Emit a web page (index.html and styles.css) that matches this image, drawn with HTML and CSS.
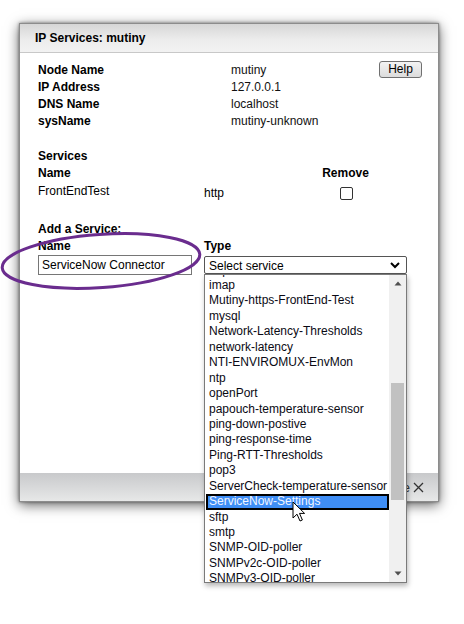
FILE: index.html
```html
<!DOCTYPE html>
<html>
<head>
<meta charset="utf-8">
<link rel="stylesheet" href="styles.css">
</head>
<body>
<div class="stage">
  <div class="dialog">
    <div class="dlg-head">IP Services: mutiny</div>
    <div class="dlg-body">
      <div class="info">
        <div class="lbl">Node Name</div><div class="val">mutiny</div><button class="help">Help</button>
        <div class="lbl">IP Address</div><div class="val">127.0.0.1</div><div></div>
        <div class="lbl">DNS Name</div><div class="val">localhost</div><div></div>
        <div class="lbl">sysName</div><div class="val">mutiny-unknown</div><div></div>
      </div>

      <div class="section">
        <div class="lbl">Services</div>
        <div class="svc-grid">
          <div class="lbl">Name</div><div></div><div class="lbl center">Remove</div>
          <div class="svc-name">FrontEndTest</div><div class="svc-type">http</div><div class="center"><span class="check"></span></div>
        </div>
      </div>

      <div class="section add">
        <div class="lbl">Add a Service:</div>
        <div class="add-grid">
          <div class="lbl">Name</div><div class="lbl">Type</div>
          <div class="input">ServiceNow Connector</div>
          <div class="type-field">
            <div class="select">
              <span>Select service</span>
              <svg class="chev" width="10" height="7" viewBox="0 0 10 7"><polyline points="1,1 5,5 9,1" fill="none" stroke="#000" stroke-width="2"/></svg>
            </div>
            <div class="dropdown">
              <div class="items">
                <div class="item first">http</div>
                <div class="item">imap</div>
                <div class="item">Mutiny-https-FrontEnd-Test</div>
                <div class="item">mysql</div>
                <div class="item">Network-Latency-Thresholds</div>
                <div class="item">network-latency</div>
                <div class="item">NTI-ENVIROMUX-EnvMon</div>
                <div class="item">ntp</div>
                <div class="item">openPort</div>
                <div class="item">papouch-temperature-sensor</div>
                <div class="item">ping-down-postive</div>
                <div class="item">ping-response-time</div>
                <div class="item">Ping-RTT-Thresholds</div>
                <div class="item">pop3</div>
                <div class="item">ServerCheck-temperature-sensor</div>
                <div class="item sel">ServiceNow-Settings</div>
                <div class="item">sftp</div>
                <div class="item">smtp</div>
                <div class="item">SNMP-OID-poller</div>
                <div class="item">SNMPv2c-OID-poller</div>
                <div class="item">SNMPv3-OID-poller</div>
                <div class="item">ssh</div>
              </div>
              <div class="scrollbar">
                <div class="sb-btn"><svg width="8" height="5" viewBox="0 0 8 5"><polygon points="0.5,4.5 4,0.5 7.5,4.5" fill="#505050"/></svg></div>
                <div class="sb-track"><div class="sb-thumb"></div></div>
                <div class="sb-btn"><svg width="8" height="5" viewBox="0 0 8 5"><polygon points="0.5,0.5 7.5,0.5 4,4.5" fill="#505050"/></svg></div>
              </div>
            </div>
          </div>
        </div>
      </div>
    </div>
    <div class="dlg-foot">
      <span>Close</span>
      <svg width="11" height="11" viewBox="0 0 11 11"><path d="M1 1L10 10M10 1L1 10" stroke="#333" stroke-width="1.3"/></svg>
    </div>
  </div>
</div>
<svg class="annot" width="464" height="624" viewBox="0 0 464 624">
  <ellipse cx="101" cy="261" rx="99" ry="26.5" transform="rotate(-4 101 261)" fill="none" stroke="#6a2c8e" stroke-width="3"/>
  <path class="cursor" d="M293 502 L293 518 L297 514.2 L300 521 L302.4 520 L299.5 513.4 L304.6 513.4 Z" fill="#fff" stroke="#000" stroke-width="1" stroke-linejoin="miter"/>
</svg>
</body>
</html>
```

FILE: styles.css
```css
html, body {
  margin: 0;
  padding: 0;
  background: #fff;
}
body {
  width: 464px;
  height: 624px;
  position: relative;
  overflow: hidden;
  font-family: "Liberation Sans", Arial, sans-serif;
  font-size: 12px;
  color: #000;
}
.stage {
  padding: 23px 0 0 19px;
}
.dialog {
  width: 420px;
  box-sizing: border-box;
  border: 1px solid #8c8c8c;
  background: #fff;
  box-shadow: 0 0 3px rgba(0,0,0,0.45), 0 3px 12px rgba(0,0,0,0.6);
}
.dlg-head {
  height: 28px;
  line-height: 28px;
  padding-left: 15px;
  font-weight: bold;
  border-bottom: 1px solid #c8c8c8;
  background: linear-gradient(#d6d6d6, #ececec 55%, #f2f2f2);
}
.dlg-body {
  height: 420px;
  box-sizing: border-box;
  padding: 9px 16px 0 18px;
}
.info {
  display: grid;
  grid-template-columns: 193px 1fr auto;
  grid-auto-rows: 17px;
  line-height: 17px;
}
.lbl {
  font-weight: bold;
  line-height: 17px;
}
.val {
  color: #111;
}
.help {
  margin-top: -1px;
  width: 43px;
  height: 17px;
  padding: 0;
  font-family: inherit;
  font-size: 12px;
  line-height: 15px;
  color: #000;
  border: 1px solid #707070;
  border-radius: 3px;
  background: linear-gradient(#f3f3f3, #dcdcdc);
}
.section {
  margin-top: 18px;
}
.svc-grid {
  display: grid;
  grid-template-columns: 166px 118px 47px;
  grid-template-rows: 17px 21px;
}
.center {
  text-align: center;
}
.svc-name {
  line-height: 15px;
  padding-top: 2px;
}
.svc-type {
  align-self: center;
}
.svc-grid .center:last-child {
  display: flex;
  justify-content: center;
  align-items: center;
  padding-top: 1px;
}
.check {
  display: block;
  width: 11px;
  height: 11px;
  border: 1px solid #333;
  border-radius: 2px;
  background: #fff;
  margin-left: 1px;
}
.add {
  margin-top: 18px;
}
.add-grid {
  display: grid;
  grid-template-columns: 166px 203px;
  grid-template-rows: 17px auto;
}
.input {
  width: 154px;
  height: 20px;
  box-sizing: border-box;
  border: 1px solid #767676;
  padding-left: 3px;
  line-height: 18px;
  font-size: 12px;
}
.type-field {
  position: relative;
  margin-top: 1px;
}
.select {
  height: 18px;
  box-sizing: border-box;
  border: 1px solid #555;
  border-radius: 2px;
  padding: 1px 6px 0 4px;
  display: flex;
  align-items: center;
  justify-content: space-between;
  line-height: 16px;
}
.chev {
  display: block;
}
.dropdown {
  position: absolute;
  left: 0;
  top: 18px;
  width: 203px;
  height: 309px;
  box-sizing: border-box;
  border: 1px solid #7a7a7a;
  background: #fff;
  box-shadow: 1px 3px 5px rgba(0,0,0,0.28);
  display: flex;
  z-index: 5;
  overflow: hidden;
}
.items {
  flex: 1;
  overflow: hidden;
}
.item {
  height: 15.45px;
  line-height: 15.45px;
  padding-left: 4px;
  white-space: nowrap;
  color: #0a0a14;
  box-sizing: border-box;
}
.item.first {
  margin-top: -12.4px;
}
.item.sel {
  margin-left: 1px;
  padding-left: 1px;
  background: #3f8ef6;
  border: 2px solid #000;
  color: #f2f6ff;
  line-height: 11.45px;
}
.scrollbar {
  width: 17px;
  background: #f0f0f0;
  display: flex;
  flex-direction: column;
}
.sb-btn {
  height: 17px;
  display: flex;
  align-items: center;
  justify-content: center;
}
.sb-btn svg {
  display: block;
}
.sb-track {
  flex: 1;
}
.sb-thumb {
  margin: 91px 2px 0 2px;
  height: 117px;
  background: #c1c1c1;
}
.dlg-foot {
  height: 28px;
  background: linear-gradient(#c8c9cb, #e7e8e8);
  display: flex;
  align-items: center;
  justify-content: flex-end;
  gap: 3px;
  padding-right: 14px;
  color: #333;
  font-size: 13px;
}
.dlg-foot svg {
  display: block;
}
.annot {
  position: absolute;
  left: 0;
  top: 0;
  pointer-events: none;
  z-index: 10;
}
```
